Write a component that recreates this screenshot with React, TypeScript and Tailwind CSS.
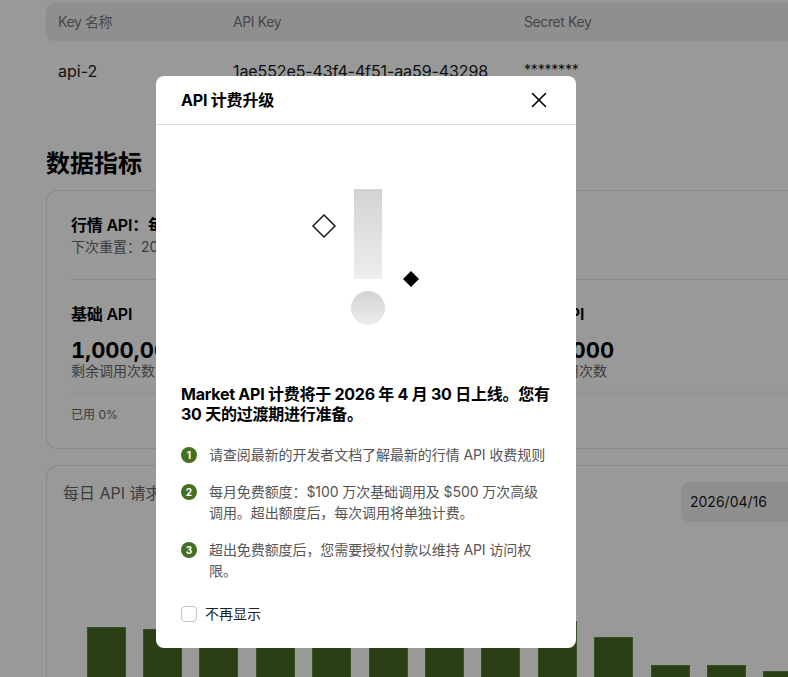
import { X } from "lucide-react";

const FONT = "font-['Inter','Noto_Sans_CJK_SC',sans-serif]";

const bars = [74, 72, 60, 60, 60, 60, 60, 60, 80, 64, 36, 36, 30];

const steps = [
  { n: 1, text: "请查阅最新的开发者文档了解最新的行情 API 收费规则" },
  { n: 2, text: "每月免费额度：$100 万次基础调用及 $500 万次高级调用。超出额度后，每次调用将单独计费。" },
  { n: 3, text: "超出免费额度后，您需要授权付款以维持 API 访问权限。" },
];

const Quota = ({ title, value }: { title: string; value: string }) => (
  <div>
    <div className="h-5 text-base font-semibold leading-5 tracking-[-0.2px] text-black">{title}</div>
    <div className="mt-[15px] h-[23px] text-[22px] font-bold leading-[23px] tabular-nums text-black">{value}</div>
    <div className="h-[18px] text-sm leading-[18px] text-[#666666]">剩余调用次数</div>
    <div className="mt-[11px] h-1 bg-[#f7f7f7]"></div>
    <div className="mt-[11px] text-xs leading-[18px] text-[#666666]">已用 0%</div>
  </div>
);

const Page = () => (
  <div className="w-[1000px] pl-[46px] pt-[3px]">
    {/* API key table */}
    <div className="grid h-[38px] grid-cols-[175px_291px_1fr] items-center rounded-l-lg bg-[#eeeeee] pl-3 text-sm tracking-[-0.4px] text-[#777777]">
      <div>Key 名称</div>
      <div>API Key</div>
      <div>Secret Key</div>
    </div>
    <div className="grid h-[60px] grid-cols-[175px_291px_1fr] items-center pl-3 text-[#1a1a1a]">
      <div className="text-base">api-2</div>
      <div className="text-base tracking-[-0.1px]">1ae552e5-43f4-4f51-aa59-43298</div>
      <div className="-mt-[2px] text-sm tracking-[-0.2px]">********</div>
    </div>

    <h2 className="mt-[48px] h-[30px] text-2xl font-bold leading-[30px] text-black">数据指标</h2>

    {/* Usage card */}
    <div className="mt-[11px] h-[259px] rounded-l-xl border border-[#e5e5e5] border-r-0 px-6 pt-6">
      <div className="h-5 text-base font-semibold leading-5 tracking-[-0.2px] text-black">行情 API：每日重置</div>
      <div className="mt-[2px] h-5 text-sm leading-5 text-[#666666]">下次重置：2026/04/17</div>
      <div className="mt-[22px] border-t border-[#e5e5e5] pt-6">
        <div className="grid grid-cols-[428px_428px] gap-6">
          <Quota title="基础 API" value="1,000,000" />
          <Quota title="高级 API" value="500,000" />
        </div>
      </div>
    </div>

    {/* Daily requests card */}
    <div className="mt-4 h-[300px] rounded-tl-xl border border-[#e5e5e5] border-r-0">
      <div className="flex h-[135px] items-start justify-between pl-4 pr-[100px] pt-4">
        <div className="mt-[1px] text-base leading-5 text-[#666666]">每日 API 请求</div>
        <div className="flex h-10 w-[219px] items-center rounded-lg bg-[#eeeeee] pl-[9px] text-sm text-[#1a1a1a]">
          2026/04/16
        </div>
      </div>
      <div className="flex h-[100px] items-end gap-[17.4px] pl-[39.7px]">
        {bars.map((h, i) => (
          <div
            key={i}
            className="w-[39px] shrink-0 border border-[#5c8540] bg-[#466a21]"
            style={{ height: h }}
          ></div>
        ))}
      </div>
    </div>
  </div>
);

const Illustration = () => (
  <div className="flex h-[260px] justify-center">
    <svg width="420" height="260" viewBox="0 0 420 260" fill="none">
      <defs>
        <linearGradient id="barFill" x1="0" y1="0" x2="0" y2="1">
          <stop offset="0" stopColor="#d2d2d2" />
          <stop offset="1" stopColor="#eeeeee" />
        </linearGradient>
        <linearGradient id="dotFill" x1="0" y1="0" x2="0" y2="1">
          <stop offset="0" stopColor="#d4d4d4" />
          <stop offset="1" stopColor="#ececec" />
        </linearGradient>
      </defs>
      <rect x="198" y="64" width="28" height="90" fill="url(#barFill)" />
      <circle cx="212" cy="183" r="17" fill="url(#dotFill)" />
      <path d="M168 90 L179 101 L168 112 L157 101 Z" stroke="#1a1a1a" strokeWidth="1.5" />
      <path d="M255 146 L263 154 L255 162 L247 154 Z" fill="#000000" />
    </svg>
  </div>
);

const Modal = () => (
  <div className="absolute left-[156px] top-[76px] h-[572px] w-[420px] rounded-lg bg-white">
    <div className="flex h-[49px] items-center justify-between border-b border-[#dddddd] pl-[25px] pr-6">
      <div className="text-base font-bold tracking-[-0.2px] text-black">API 计费升级</div>
      <X className="h-[26px] w-[26px] text-black" strokeWidth={1.4} />
    </div>
    <Illustration />
    <div className="-mt-[1px] px-[25px]">
      <p className="text-base font-bold leading-[20px] tracking-[-0.25px] text-black">
        Market API 计费将于 2026 年 4 月 30 日上线。您有 30 天的过渡期进行准备。
      </p>
      <div className="mt-[20px] flex flex-col gap-4">
        {steps.map((s) => (
          <div key={s.n} className="flex gap-3">
            <div className="mt-[3px] flex h-4 w-4 shrink-0 items-center justify-center rounded-full bg-[#467021] text-[10px] font-bold text-white">
              {s.n}
            </div>
            <div className="text-sm leading-[21px] tracking-[-0.08px] text-[#555555]">{s.text}</div>
          </div>
        ))}
      </div>
      <div className="mt-[23px] flex items-center gap-2">
        <div className="h-4 w-4 rounded-[4px] border border-[#c4c4c4] bg-white"></div>
        <div className="text-sm leading-5 text-[#222222]">不再显示</div>
      </div>
    </div>
  </div>
);

export default function App() {
  return (
    <div className={`relative h-[677px] w-[788px] overflow-hidden bg-white ${FONT}`}>
      <Page />
      <div className="absolute inset-0 bg-black/40"></div>
      <Modal />
    </div>
  );
}
